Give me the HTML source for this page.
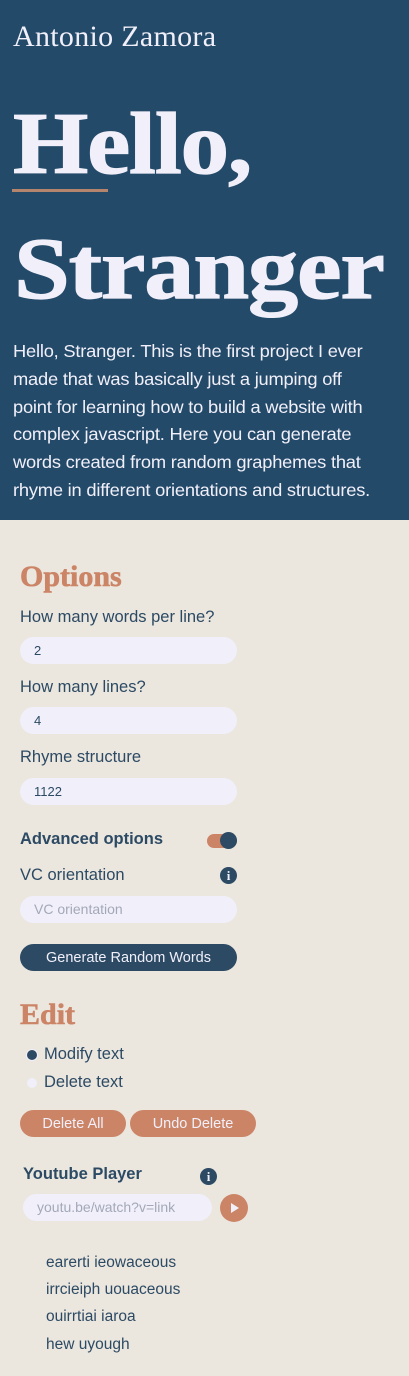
<!DOCTYPE html>
<html><head><meta charset="utf-8"><style>
*{margin:0;padding:0;box-sizing:border-box}
body{width:409px;height:1376px;background:#ebe6de;position:relative;overflow:hidden;font-family:"Liberation Sans",sans-serif;color:#2c4a64}
.a{position:absolute;white-space:nowrap}
header{position:absolute;left:0;top:0;width:409px;height:520px;background:#244a69;color:#f1f0fa}
.serif{font-family:"Liberation Serif",serif}
.big{font-family:"Liberation Serif",serif;font-weight:bold;font-size:88px;line-height:1;letter-spacing:-1px;transform-origin:left top;-webkit-text-stroke:1.2px #f1f0fa}
.p{font-size:17.6px;line-height:27.8px;letter-spacing:-0.2px}
.h2{font-family:"Liberation Serif",serif;font-weight:bold;color:#cc8466;font-size:30px;-webkit-text-stroke:0.6px #cc8466}
.lbl{font-size:16.5px}
.inp{position:absolute;background:#f1f0fa;border-radius:14px;height:27px;font-size:13px;padding-left:14px;line-height:27px;color:#2c4a64}
.btn{position:absolute;border-radius:14px;height:27px;color:#f1f0fa;font-size:14.5px;text-align:center;line-height:29px}
.info{position:absolute;width:17px;height:17px;border-radius:50%;background:#2c4a64;color:#f1f0fa;font-family:"Liberation Serif",serif;font-weight:bold;font-size:13px;text-align:center;line-height:17px}
.w{font-size:15.5px}
</style></head><body>
<header>
<div class="a serif" style="left:13px;top:20px;font-size:30px;letter-spacing:0.3px">Antonio Zamora</div>
<div class="a big" style="left:13px;top:101px;transform:scaleX(1.1)">Hello,</div>
<div class="a" style="left:12px;top:189px;width:96px;height:3px;background:#b5846c"></div>
<div class="a big" style="left:14px;top:226px;transform:scaleX(1.14)">Stranger</div>
<div class="a p" style="left:13px;top:338px;transform:scaleX(1.04);transform-origin:left top">Hello, Stranger. This is the first project I ever<br>made that was basically just a jumping off<br>point for learning how to build a website with<br>complex javascript. Here you can generate<br>words created from random graphemes that<br>rhyme in different orientations and structures.</div>
</header>
<div class="a h2" style="left:20px;top:560px">Options</div>
<div class="a lbl" style="left:20px;top:608px">How many words per line?</div>
<div class="inp" style="left:20px;top:637px;width:217px">2</div>
<div class="a lbl" style="left:20px;top:678px">How many lines?</div>
<div class="inp" style="left:20px;top:707px;width:217px">4</div>
<div class="a lbl" style="left:20px;top:748px">Rhyme structure</div>
<div class="inp" style="left:20px;top:778px;width:217px">1122</div>
<div class="a lbl" style="left:20px;top:830px;font-weight:bold">Advanced options</div>
<div class="a" style="left:207px;top:834px;width:30px;height:14px;border-radius:7px;background:#cc8466"></div>
<div class="a" style="left:220px;top:832px;width:17px;height:17px;border-radius:50%;background:#2c4a64"></div>
<div class="a lbl" style="left:20px;top:866px">VC orientation</div>
<div class="info" style="left:220px;top:867px">i</div>
<div class="inp" style="left:20px;top:896px;width:217px;color:#a3a8b8;font-size:14px">VC orientation</div>
<div class="btn" style="left:20px;top:944px;width:217px;background:#2c4a64">Generate Random Words</div>
<div class="a h2" style="left:20px;top:998px">Edit</div>
<div class="a" style="left:27px;top:1050px;width:10px;height:10px;border-radius:50%;background:#2c4a64;box-shadow:0 0 0 1px #f1f0fa"></div>
<div class="a lbl" style="left:44px;top:1045px">Modify text</div>
<div class="a" style="left:27px;top:1078px;width:10px;height:10px;border-radius:50%;background:#f1f0fa"></div>
<div class="a lbl" style="left:44px;top:1073px">Delete text</div>
<div class="btn" style="left:20px;top:1110px;width:106px;background:#cc8466">Delete All</div>
<div class="btn" style="left:130px;top:1110px;width:126px;background:#cc8466">Undo Delete</div>
<div class="a lbl" style="left:23px;top:1165px;font-weight:bold">Youtube Player</div>
<div class="info" style="left:200px;top:1168px">i</div>
<div class="inp" style="left:23px;top:1194px;width:189px;color:#a3a8b8;font-size:14px">youtu.be/watch?v=link</div>
<div class="a" style="left:220px;top:1194px;width:28px;height:28px;border-radius:50%;background:#cc8466"></div>
<svg class="a" style="left:220px;top:1194px" width="28" height="28"><path d="M11 9 L19 14 L11 19 Z" fill="#f1f0fa"/></svg>
<div class="a w" style="left:46px;top:1254px">earerti ieowaceous</div>
<div class="a w" style="left:46px;top:1281px">irrcieiph uouaceous</div>
<div class="a w" style="left:46px;top:1308px">ouirrtiai iaroa</div>
<div class="a w" style="left:46px;top:1336px">hew uyough</div>
</body></html>
